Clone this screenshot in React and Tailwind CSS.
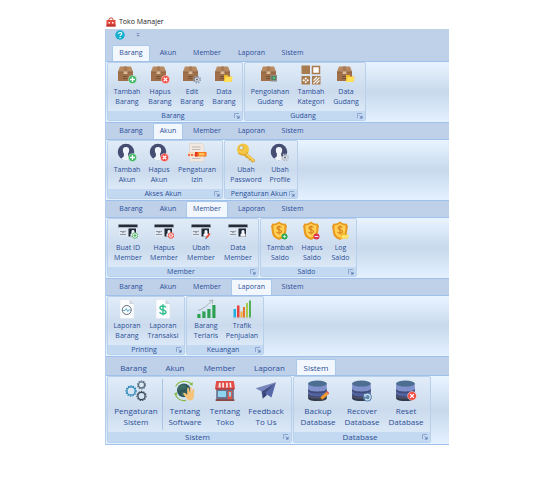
import React from "react";
import clsx from "clsx";

/* ---------- badges drawn over the lower right corner of an icon ---------- */

const PlusBadge = () => (
  <g>
    <circle cx="31" cy="29" r="8" fill="#35b35c" stroke="#eaf6ee" strokeWidth="1" />
    <path d="M31 24v10M26 29h10" stroke="#fff" strokeWidth="2.6" />
  </g>
);

const CrossBadge = () => (
  <g>
    <circle cx="31" cy="29" r="8" fill="#f0483e" stroke="#fbeaea" strokeWidth="1" />
    <path d="M27.5 25.5l7 7M34.5 25.5l-7 7" stroke="#fff" strokeWidth="2.4" />
  </g>
);

const GearBadge = ({ color = "#8d97a8" }) => (
  <g>
    <circle cx="30" cy="29" r="6.6" fill="none" stroke={color} strokeWidth="3" strokeDasharray="2.8 2.4" />
    <circle cx="30" cy="29" r="4.6" fill="#e9edf3" stroke={color} strokeWidth="1.6" />
    <circle cx="30" cy="29" r="1.8" fill="#4b5568" />
  </g>
);

const FolderBadge = () => (
  <g>
    <path d="M20 20h7l2 3h7v10H20z" fill="#f0bd2c" />
    <path d="M24 24h14l-4 10H20z" fill="#ffe05a" />
  </g>
);

const MonitorBadge = () => (
  <g>
    <path d="M21 20h13v13H21z" fill="#8b8f88" />
    <path d="M23 22h9v8h-9z" fill="#5f7564" />
    <circle cx="28" cy="26" r="2.6" fill="#3fc96b" />
  </g>
);

/* ---------- large icons ---------- */

const Box = ({ children }) => (
  <>
    <path d="M6 3h22l4 10H2z" fill="#b98a60" />
    <path d="M2 13h30v19H2z" fill="#9f7049" />
    <path d="M14 3h6l1 10h-8z" fill="#a67a54" />
    <path d="M13 13h8v5h-8z" fill="#d9bb98" />
    <path d="M2 13h11v2H2zM21 13h11v2H21z" fill="#8c5e3e" />
    <path d="M12 23h9M12 27h9" stroke="#6a4a33" strokeWidth="1.6" />
    {children}
  </>
);

const Person = ({ children }) => (
  <>
    <circle cx="18" cy="18" r="16.500" fill="#454d72" />
    <path
      d="M18 8c-5 0-6.500 3-6.300 7 .2 3 1.300 5 2.300 6.500L13.500 27l-5 4c3 2.800 6 3.500 9.500 3.500s6.500-.7 9.500-3.500l-5-4-.5-5.500c1-1.500 2.100-3.500 2.300-6.500C24.500 11 23 8 18 8z"
      fill="#f0f4fa"
    />
    {children}
  </>
);

const IdCard = ({ children }) => (
  <>
    <path d="M1 7h38v6H1z" fill="#232c38" />
    <path d="M2 13h36v18H2z" fill="#e1e8f1" />
    <path d="M4 21h8M4 27h12" stroke="#8c97a6" strokeWidth="2" />
    <path d="M8 24l8-4" stroke="#6e7b8e" strokeWidth="1.5" />
    <path d="M21 15h15v16H21z" fill="#1f2a38" />
    <path d="M25 31v-5l2-1v-4c0-4 6-4 6 0v4l2 1v5z" fill="#f3f5f8" />
    {children}
  </>
);

const Shield = ({ children }) => (
  <>
    <path
      d="M18 1c3 3 8 5 13 4 1 2 2 4 3 5-2 8-1 17-6 22-3 3-6 4-10 6-4-2-7-3-10-6C3 27 4 18 2 10c1-1 2-3 3-5 5 1 10-1 13-4z"
      fill="#e9981f"
    />
    <path d="M18 5c3 2.500 7 4 11 4 0 8 0 15-4 20-2 2-4 3-7 4.500-3-1.500-5-2.500-7-4.500C7 24 7 17 7 9c4 0 8-1.500 11-4z" fill="#ffd053" />
    <path d="M23 13c-2-2.500-9-3-9 1.200 0 4.300 9 2.500 9 7 0 4.300-8 4-10 .8M18 9v18" fill="none" stroke="#d97c1b" strokeWidth="2.2" />
    {children}
  </>
);

const Database = ({ children }) => (
  <>
    <path d="M2 25v8c0 7 34 7 34 0v-8z" fill="#343a4d" />
    <path d="M2 15v10c0 7 34 7 34 0V15z" fill="#5262a1" />
    <path d="M2 6v10c0 7 34 7 34 0V6z" fill="#8091cc" />
    <path d="M2 16v3c0 7 34 7 34 0v-3c0 7-34 7-34 0z" fill="#414b77" />
    <path d="M2 26v3c0 7 34 7 34 0v-3c0 7-34 7-34 0z" fill="#4c5268" />
    <ellipse cx="19" cy="6.500" rx="17" ry="5.500" fill="#4d6d91" />
    {children}
  </>
);

const Sheet = ({ children }) => (
  <>
    <path d="M6 1h19l9 9v29H6z" fill="#fbfcfe" stroke="#dde3ea" strokeWidth="1" />
    <path d="M25 1v9h9z" fill="#cfd6df" />
    {children}
  </>
);

const Gear = ({ cx, cy, r, color }) => (
  <g fill="none" stroke={color}>
    <circle cx={cx} cy={cy} r={r} strokeWidth="2.2" />
    <circle cx={cx} cy={cy} r={r + 1.8} strokeWidth="2" strokeDasharray="2.600 2" />
  </g>
);

const drawings = {
  boxAdd: <Box><PlusBadge /></Box>,
  boxRemove: <Box><CrossBadge /></Box>,
  boxEdit: <Box><GearBadge /></Box>,
  boxData: <Box><FolderBadge /></Box>,
  boxManage: <Box><MonitorBadge /></Box>,
  category: (
    <>
      <path d="M1 1h17v17H1z" fill="#a87c4f" />
      <path d="M23 3h14v14H23z" fill="#fdfcfa" stroke="#a87c4f" strokeWidth="3" />
      <path d="M1 22h17v17H1zM22 22h17v17H22z" fill="#a87c4f" />
      <path d="M9.500 24.500l2.500 2.500-2.500 2.500L7 27zM9.500 31.500L12 34l-2.500 2.500L7 34zM5.500 28L8 30.500 5.500 33 3 30.500zM13.500 28l2.500 2.500-2.500 2.500-2.500-2.500z" fill="#fff" />
      <path d="M25 31l7-7M25 37l12-12M31 37l6-6" stroke="#fff" strokeWidth="2.200" />
    </>
  ),
  personAdd: <Person><PlusBadge /></Person>,
  personRemove: <Person><CrossBadge /></Person>,
  personEdit: <Person><GearBadge color="#b9bec8" /></Person>,
  permission: (
    <>
      <path d="M5 1h25l4 5v31H5z" fill="#f1e8e1" stroke="#d8cbc2" strokeWidth="1" />
      <path d="M10 8h17M10 13h17M10 31h17" stroke="#bfb3aa" strokeWidth="1.800" />
      <path d="M2 18h14v9H2z" fill="#f9d8b8" />
      <path d="M2 24h13" stroke="#ef4b2b" strokeWidth="3" strokeDasharray="4 2" />
      <path d="M16 18h23v9H16z" fill="#f4791f" />
      <path d="M16 18h5v9h-5z" fill="#e2371f" />
      <path d="M24 20h11v5H24z" fill="#ffc257" />
    </>
  ),
  key: (
    <>
      <path d="M18 17l20 17-1 4-5 1-2-4-4 0-1-4-4-1-8-8z" fill="#d9a12a" />
      <circle cx="14" cy="13" r="12" fill="#f3c643" />
      <path d="M18 20l18 16" stroke="#f5cf58" strokeWidth="4" />
      <path d="M5 20a12 12 0 0 0 19-2" fill="none" stroke="#dea62c" strokeWidth="2.500" />
      <circle cx="10.500" cy="9.500" r="4" fill="#dce8f5" stroke="#cd951f" strokeWidth="1.200" />
    </>
  ),
  cardAdd: (
    <IdCard>
      <circle cx="34" cy="29" r="5.500" fill="#e9f7ec" stroke="#48ad60" strokeWidth="1.600" />
      <path d="M34 26v6M31 29h6" stroke="#48ad60" strokeWidth="1.800" />
    </IdCard>
  ),
  cardRemove: (
    <IdCard>
      <circle cx="34" cy="29" r="5.500" fill="#fdeceb" stroke="#ee4c42" strokeWidth="2" />
      <path d="M31.500 26.500l5 5M36.500 26.500l-5 5" stroke="#ee4c42" strokeWidth="1.800" />
    </IdCard>
  ),
  cardEdit: (
    <IdCard>
      <path d="M29 33l7-9 3 2-7 9z" fill="#e8503c" />
      <path d="M29 33l3 2-4 2z" fill="#4a8fd1" />
    </IdCard>
  ),
  card: <IdCard />,
  shieldAdd: (
    <Shield>
      <circle cx="29" cy="31" r="6" fill="#2fa856" />
      <path d="M29 28v6M26 31h6" stroke="#d8f3df" strokeWidth="1.800" />
    </Shield>
  ),
  shieldRemove: (
    <Shield>
      <circle cx="29" cy="31" r="6" fill="#dd3355" />
      <path d="M25.500 31h7" stroke="#fde6ea" strokeWidth="2" />
    </Shield>
  ),
  shieldLog: (
    <Shield>
      <path d="M20 24h6l2 3h6v8H20z" fill="#f0b92a" />
      <path d="M23 28h13l-3 7H20z" fill="#ffe36a" />
    </Shield>
  ),
  reportGoods: (
    <Sheet>
      <circle cx="19.500" cy="22" r="9" fill="none" stroke="#66717f" strokeWidth="2" />
      <path d="M12 23h4l2.500-4 3 6 2-3h4" fill="none" stroke="#4fa3c7" strokeWidth="1.800" />
    </Sheet>
  ),
  reportMoney: (
    <Sheet>
      <path d="M25.500 17c-2-4-11.500-4-11.500 .8 0 5 12 2.700 12 8.200 0 5-11 4.700-12.800 .4M20 10.500v22" fill="none" stroke="#2fbd8b" strokeWidth="2.800" />
    </Sheet>
  ),
  growth: (
    <>
      <path d="M2 30h7v8H2zM12 25h7v13h-7zM22 20h7v18h-7zM32 12h7v26h-7z" fill="#2e9e55" />
      <path d="M2 30h2v8H2zM12 25h2v13h-2zM22 20h2v18h-2zM32 12h2v26h-2z" fill="#5dbb7b" />
      <path d="M4 23C14 20 23 13 31 4" fill="none" stroke="#95a0a5" strokeWidth="1.500" />
      <path d="M26 3l8-1-2 8" fill="none" stroke="#95a0a5" strokeWidth="1.500" />
    </>
  ),
  traffic: (
    <>
      <path d="M3 20h5v17H3z" fill="#25aee0" />
      <path d="M10 13h5v24h-5z" fill="#e8423b" />
      <path d="M17 25h4v12h-4z" fill="#f3aa30" />
      <path d="M22 16h4v21h-4z" fill="#e9752c" />
      <path d="M28 8h4v29h-4z" fill="#a9c94a" />
      <path d="M34 3h4v34h-4z" fill="#54b054" />
      <path d="M1 38.500h38" stroke="#b9c4cc" strokeWidth="1" />
    </>
  ),
  gears: (
    <>
      <Gear cx={11} cy={20} r={7.5} color="#2585b5" />
      <Gear cx={30} cy={9} r={5.5} color="#5c6e80" />
      <Gear cx={30} cy={29} r={6.5} color="#364554" />
    </>
  ),
  software: (
    <>
      <circle cx="18" cy="19" r="12.500" fill="#2e5a5c" />
      <path d="M12 9c5-2 9 0 10 3s-3 5-6 5-7 4-9 1c-1-3 1-7 5-9zM14 22c4-1 7 3 5 8-4 1-7-4-5-8z" fill="#3d6c64" />
      <path d="M3 12C8 1 24-1 32 8" fill="none" stroke="#86ba49" strokeWidth="2" />
      <path d="M28 9l6 1 0-7z" fill="#86ba49" />
      <path d="M2 25c2 8 10 14 20 12" fill="none" stroke="#86ba49" strokeWidth="2" />
      <path d="M5 22l-5 3 6 3z" fill="#86ba49" />
      <path d="M24 16c0-3 3-3 3 0l1 7 1-9c0-2 3-2 3 0v9l2-6c1-2 3-1 3 1l-1 13c-1 7-9 8-12 4l-7-9c-1-3 2-4 4-2l3 3z" fill="#f6c37b" />
    </>
  ),
  store: (
    <>
      <path d="M4 14h32v23H4z" fill="#6a6f8a" />
      <path d="M3 35h34v3H3z" fill="#8c4741" />
      <path d="M7 20h15v11H7z" fill="#8fd4ee" />
      <path d="M25 20h8v15h-8z" fill="#dd5a4c" />
      <path d="M27 22h4v8h-4z" fill="#8fd4ee" />
      <path d="M4 2h32l2 12H2z" fill="#e34e46" />
      <path d="M9 5h3v9H8zM15 5h3v9h-3zM22 5h3v9h-3zM28 5h3l1 9h-3z" fill="#fbeeee" />
      <path d="M2 14h36v2c-2 3-5 3-7 0-2 3-6 3-8 0-2 3-5 3-7 0-2 3-5 3-7 0-2 3-5 3-7 0z" fill="#c43d3b" />
    </>
  ),
  plane: (
    <>
      <path d="M38 4L1 15l11 6z" fill="#7785bd" />
      <path d="M38 4L12 21l2 13 6-9z" fill="#3f4c82" />
      <path d="M38 4L18 24l12 8z" fill="#5868a8" />
      <path d="M14 34l4-10 4 3z" fill="#313c6b" />
    </>
  ),
  dbBackup: (
    <Database>
      <path d="M24 32l11-10 4 4-11 10z" fill="#f59b2d" />
      <path d="M35 22l2-2 4 4-2 2z" fill="#e55a4c" />
      <path d="M24 32l4 4-6 2z" fill="#5b4634" />
    </Database>
  ),
  dbRecover: (
    <Database>
      <circle cx="30" cy="31" r="8" fill="#5b87b0" />
      <path d="M26 34a5 5 0 1 0 0-6" fill="none" stroke="#d6e7f4" strokeWidth="2.200" />
      <path d="M24 25v5h5z" fill="#d6e7f4" />
    </Database>
  ),
  dbReset: <Database><CrossBadge /></Database>,
};

/* ---------- ribbon data ---------- */

const TABS = [
  { name: "Barang", width: "w-[38px]", largeWidth: "w-[41px]" },
  { name: "Akun", width: "w-[30px]", largeWidth: "w-[34px]" },
  { name: "Member", width: "w-[42px]", largeWidth: "w-[47px]" },
  { name: "Laporan", width: "w-[41px]", largeWidth: "w-[45px]" },
  { name: "Sistem", width: "w-[35px]", largeWidth: "w-[40px]" },
];

const ribbons = [
  {
    active: "Barang",
    groups: [
      {
        title: "Barang",
        items: [
          { icon: "boxAdd", lines: ["Tambah", "Barang"], width: "w-[34px]" },
          { icon: "boxRemove", lines: ["Hapus", "Barang"], width: "w-[32px]" },
          { icon: "boxEdit", lines: ["Edit", "Barang"], width: "w-[32px]" },
          { icon: "boxData", lines: ["Data", "Barang"], width: "w-[32px]" },
        ],
      },
      {
        title: "Gudang",
        items: [
          { icon: "boxManage", lines: ["Pengolahan", "Gudang"], width: "w-[46px]" },
          { icon: "category", lines: ["Tambah", "Kategori"], width: "w-[36px]" },
          { icon: "boxData", lines: ["Data", "Gudang"], width: "w-[34px]" },
        ],
      },
    ],
  },
  {
    active: "Akun",
    groups: [
      {
        title: "Akses Akun",
        items: [
          { icon: "personAdd", lines: ["Tambah", "Akun"], width: "w-[34px]" },
          { icon: "personRemove", lines: ["Hapus", "Akun"], width: "w-[30px]" },
          { icon: "permission", lines: ["Pengaturan", "Izin"], width: "w-[46px]" },
        ],
      },
      {
        title: "Pengaturan Akun",
        items: [
          { icon: "key", lines: ["Ubah", "Password"], width: "w-[38px]" },
          { icon: "personEdit", lines: ["Ubah", "Profile"], width: "w-[30px]" },
        ],
      },
    ],
  },
  {
    active: "Member",
    groups: [
      {
        title: "Member",
        items: [
          { icon: "cardAdd", lines: ["Buat ID", "Member"], width: "w-[36px]" },
          { icon: "cardRemove", lines: ["Hapus", "Member"], width: "w-[36px]" },
          { icon: "cardEdit", lines: ["Ubah", "Member"], width: "w-[38px]" },
          { icon: "card", lines: ["Data", "Member"], width: "w-[36px]" },
        ],
      },
      {
        title: "Saldo",
        items: [
          { icon: "shieldAdd", lines: ["Tambah", "Saldo"], width: "w-[34px]" },
          { icon: "shieldRemove", lines: ["Hapus", "Saldo"], width: "w-[30px]" },
          { icon: "shieldLog", lines: ["Log", "Saldo"], width: "w-[27px]" },
        ],
      },
    ],
  },
  {
    active: "Laporan",
    groups: [
      {
        title: "Printing",
        items: [
          { icon: "reportGoods", lines: ["Laporan", "Barang"], width: "w-[34px]" },
          { icon: "reportMoney", lines: ["Laporan", "Transaksi"], width: "w-[38px]" },
        ],
      },
      {
        title: "Keuangan",
        items: [
          { icon: "growth", lines: ["Barang", "Terlaris"], width: "w-[34px]" },
          { icon: "traffic", lines: ["Trafik", "Penjualan"], width: "w-[38px]" },
        ],
      },
    ],
  },
  {
    active: "Sistem",
    large: true,
    groups: [
      {
        title: "Sistem",
        items: [
          { icon: "gears", lines: ["Pengaturan", "Sistem"], width: "w-[52px]", divided: true },
          { icon: "software", lines: ["Tentang", "Software"], width: "w-[44px]" },
          { icon: "store", lines: ["Tentang", "Toko"], width: "w-[36px]" },
          { icon: "plane", lines: ["Feedback", "To Us"], width: "w-[46px]" },
        ],
      },
      {
        title: "Database",
        items: [
          { icon: "dbBackup", lines: ["Backup", "Database"], width: "w-[44px]" },
          { icon: "dbRecover", lines: ["Recover", "Database"], width: "w-[44px]" },
          { icon: "dbReset", lines: ["Reset", "Database"], width: "w-[44px]" },
        ],
      },
    ],
  },
];

/* ---------- ribbon parts ---------- */

function RibbonButton({ item, large }) {
  return (
    <>
      <button
        type="button"
        className={clsx(
          "flex flex-col items-center whitespace-nowrap",
          item.width,
          large ? "gap-[3px] pt-[3px] pb-[5px] leading-[11px]" : "gap-[2px] pt-[2px] pb-[4px] leading-[10px]"
        )}
      >
        <svg viewBox="0 0 40 40" className={large ? "size-[22px]" : "size-[20px]"} aria-hidden="true">
          {drawings[item.icon]}
        </svg>
        <span className="flex flex-col items-center">
          <span>{item.lines[0]}</span>
          <span>{item.lines[1]}</span>
        </span>
      </button>
      {item.divided && <span className="my-[2px] w-px bg-[#a9c3e2]" />}
    </>
  );
}

function RibbonGroup({ group, large }) {
  return (
    <section
      aria-label={group.title}
      className="flex flex-col overflow-hidden rounded-[2px] border border-[#b9d0ea] bg-linear-to-b from-[#e1ecf8] via-[#cbdbed] to-[#e2eefb]"
    >
      <div className="flex px-[2px]">
        {group.items.map((item) => (
          <RibbonButton key={item.icon} item={item} large={large} />
        ))}
      </div>
      <div
        className={clsx(
          "flex items-center bg-[#c3d9f1] pr-[2px]",
          large ? "h-[10px] leading-[10px]" : "h-[9px] leading-[9px]"
        )}
      >
        <span className="grow pl-[4px] text-center whitespace-nowrap">{group.title}</span>
        <button type="button" aria-label={`${group.title} options`}>
          <svg viewBox="0 0 12 12" className="size-[6px]" aria-hidden="true">
            <path d="M1 10V1h9" fill="none" stroke="#7f9cc8" strokeWidth="1.6" />
            <path d="M5 5l4 4" stroke="#5c7db3" strokeWidth="1.6" />
            <path d="M11 5v6H5z" fill="#5c7db3" />
          </svg>
        </button>
      </div>
    </section>
  );
}

function Ribbon({ ribbon }) {
  const { active, groups, large } = ribbon;
  return (
    <section className={large ? "text-[8px]" : "text-[7px]"}>
      <div
        role="tablist"
        className={clsx(
          "flex",
          large ? "h-[18px] gap-[4px] px-[7px] pt-[2px]" : "h-[16px] gap-[3px] px-[6px]"
        )}
      >
        {TABS.map(({ name, width, largeWidth }) => (
          <button
            key={name}
            type="button"
            role="tab"
            aria-selected={name === active}
            className={clsx(
              "flex items-center justify-center rounded-t-[2px] border border-b-0",
              large ? largeWidth : width,
              name === active ? "border-[#a9c8ec] bg-[#f2f7fe]" : "border-transparent"
            )}
          >
            {name}
          </button>
        ))}
      </div>
      <div className="flex gap-px border-y border-[#9fc0ea] bg-linear-to-b from-[#e9f4ff] via-[#c8d9ed] to-[#e4f1ff] pb-px pl-px">
        {groups.map((group) => (
          <RibbonGroup key={group.title} group={group} large={large} />
        ))}
      </div>
    </section>
  );
}

export default function App() {
  return (
    <div className="min-h-screen bg-white pt-[15px] pr-[104px] pl-[105px] font-['Open_Sans',sans-serif] text-[#2c4f97]">
      <header className="flex h-[14px] items-center gap-[3px] pl-px">
        <svg viewBox="0 0 20 20" className="size-[10px]" aria-hidden="true">
          <path d="M6 7V4c0-3 8-3 8 0v3" fill="none" stroke="#c4473f" strokeWidth="2" />
          <path d="M1 6h18v13H1z" fill="#e5483e" />
          <path d="M1 15h18v4H1z" fill="#bd3430" />
          <path d="M5 10h3v3H5zM12 10h3v3h-3z" fill="#fff" />
        </svg>
        <h1 className="text-[7px] leading-[10px] text-[#222]">Toko Manajer</h1>
      </header>
      <main className="overflow-hidden border-l border-[#b1cdf0] bg-[#bfd0e9]">
        <div className="flex h-[16px] items-start gap-[11px] pt-px pl-[9px]">
          <button type="button" aria-label="Help">
            <svg viewBox="0 0 20 20" className="size-[10px]" aria-hidden="true">
              <circle cx="10" cy="10" r="9.500" fill="#16b1cf" />
              <path d="M7 8c0-4 6.500-4 6.500-.5 0 2.500-3.300 2.500-3.300 4.500" fill="none" stroke="#fff" strokeWidth="2.200" />
              <circle cx="10.200" cy="15" r="1.400" fill="#fff" />
            </svg>
          </button>
          <button type="button" aria-label="Customize toolbar" className="pt-[3px]">
            <svg viewBox="0 0 8 8" className="size-[4px]" aria-hidden="true">
              <path d="M1 1h6" stroke="#7088b8" strokeWidth="1.500" />
              <path d="M1 4h6L4 7z" fill="#6079ad" />
            </svg>
          </button>
        </div>
        {ribbons.map((ribbon) => (
          <Ribbon key={ribbon.active} ribbon={ribbon} />
        ))}
      </main>
    </div>
  );
}
